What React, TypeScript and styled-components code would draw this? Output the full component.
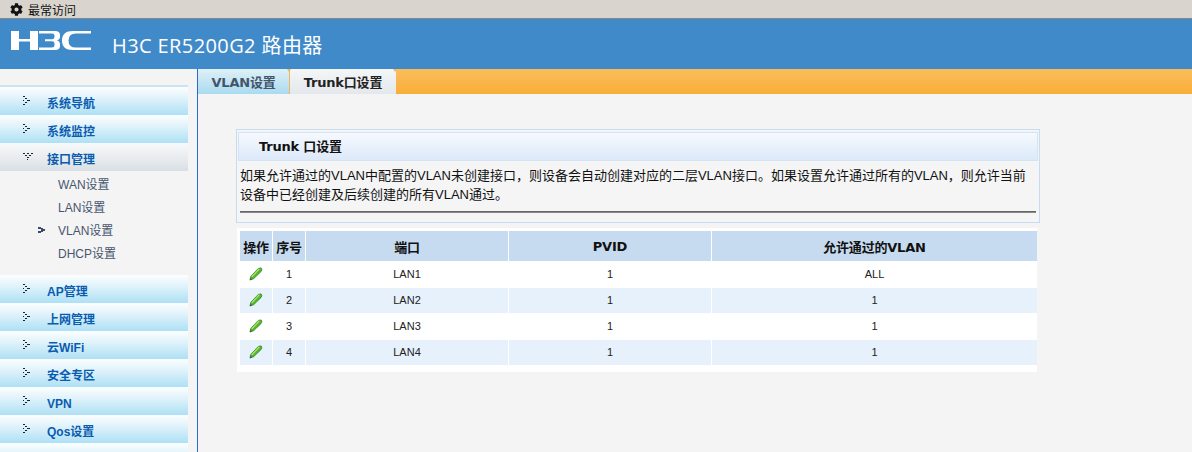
import React from "react";
import styled, { createGlobalStyle } from "styled-components";
import { FaCog } from "react-icons/fa";

const FONT = `"Liberation Sans", "Noto Sans CJK SC", sans-serif`;
const WIDE_FONT = `"DejaVu Sans", "Noto Sans CJK SC", sans-serif`;

const menuTop = ["系统导航", "系统监控"];
const menuBottom = ["AP管理", "上网管理", "云WiFi", "安全专区", "VPN", "Qos设置"];
const subMenu = ["WAN设置", "LAN设置", "VLAN设置", "DHCP设置"];
const rows = [
	{ id: 1, port: "LAN1", pvid: "1", vlan: "ALL" },
	{ id: 2, port: "LAN2", pvid: "1", vlan: "1" },
	{ id: 3, port: "LAN3", pvid: "1", vlan: "1" },
	{ id: 4, port: "LAN4", pvid: "1", vlan: "1" },
];

const Logo = () => (
	<LogoMark width="82" height="22" viewBox="0 0 82 22">
		<g fill="#ffffff">
			<path d="M1 1h8v8h11V1h8v19h-8v-8.500H9V20H1z" />
			<path d="M29 1h16q5 0 5 4v1.800q0 2.800-3 3.600q3 .8 3 3.800V16q0 4-5 4H29v-2.400h13q2.500 0 2.500-2.400v-1.500q0-2.500-2.500-2.500h-7V9.300h7q2.500 0 2.500-2.300V5.700q0-2.300-2.500-2.300H29z" />
			<path d="M81 1v2.400H66q-7.500 0-7.500 7.100T66 17.600h15V20H63q-11 0-11-9.500T63 1z" />
		</g>
	</LogoMark>
);

const Pencil = () => (
	<svg width="14" height="14" viewBox="0 0 15 15" style={{ display: "block" }}>
		<path d="M1 14l1-4 8-8.500 3-.5.800 2-1 2-7.800 7.500z" fill="#58b82c" stroke="#2f7a30" strokeWidth="0.8" />
		<path d="M3 10.500l8-8.500" stroke="#b4ec6a" strokeWidth="1.200" />
		<path d="M1 14l.7-2.600 1.800 1.700z" fill="#3c5e46" />
	</svg>
);

const Arrows = ({ open }: { open?: boolean }) => (
	<svg width="12" height="10" viewBox="0 0 12 10" style={{ display: "block" }}>
		{open ? (
			<path d="M1 1h2v1H1zM5 1h2v1H5zM9 1h2v1H9zM3 3h2v1H3zM7 3h2v1H7zM5 5h2v1H5zM5 7h1v1H5z" fill="#1d2430" />
		) : (
			<path d="M1 0h2v1H1zM3 2h2v1H3zM1 4h1v1H1zM5 4h3v1H5zM3 6h2v1H3zM1 8h2v1H1z" fill="#1d2430" />
		)}
	</svg>
);

const SubArrow = () => (
	<svg width="7" height="6" viewBox="0 0 7 6" style={{ display: "block" }}>
		<path d="M0 0h3v1h2v1h2v2H5v1H3v1H0V4h3V2H0z" fill="#3a4a68" />
	</svg>
);

export default function App() {
	return (
		<Page>
			<GlobalStyle />
			<Favorites>
				<FaCog size={13} color="#111" />
				<span>最常访问</span>
			</Favorites>
			<Banner>
				<Logo />
				<BannerTitle>H3C ER5200G2 路由器</BannerTitle>
			</Banner>
			<Body>
				<Sidebar>
					<MenuRule />
					{menuTop.map((m) => (
						<MenuItem key={m}>
							<Arrows />
							<MenuLabel>{m}</MenuLabel>
						</MenuItem>
					))}
					<MenuItem $active>
						<Arrows open />
						<MenuLabel>接口管理</MenuLabel>
					</MenuItem>
					<SubList>
						{subMenu.map((s) => (
							<SubItem key={s}>
								<SubMark>{s === "VLAN设置" && <SubArrow />}</SubMark>
								{s}
							</SubItem>
						))}
					</SubList>
					{menuBottom.map((m) => (
						<MenuItem key={m}>
							<Arrows />
							<MenuLabel>{m}</MenuLabel>
						</MenuItem>
					))}
					<MenuItem />
				</Sidebar>
				<Main>
					<TabBar>
						<Tab>VLAN设置</Tab>
						<Tab $active>Trunk口设置</Tab>
					</TabBar>
					<Content>
						<Panel>
							<PanelTitle>Trunk 口设置</PanelTitle>
							<PanelText>
								如果允许通过的VLAN中配置的VLAN未创建接口，则设备会自动创建对应的二层VLAN接口。如果设置允许通过所有的VLAN，则允许当前设备中已经创建及后续创建的所有VLAN通过。
							</PanelText>
							<Rule />
						</Panel>
						<TableWrap>
							<Table>
								<colgroup>
									<col width="33" />
									<col width="33" />
									<col width="203" />
									<col width="203" />
									<col width="325" />
								</colgroup>
								<thead>
									<tr>
										<Th>操作</Th>
										<Th>序号</Th>
										<Th>端口</Th>
										<Th>PVID</Th>
										<Th>允许通过的VLAN</Th>
									</tr>
								</thead>
								<tbody>
									{rows.map((r) => (
										<Row key={r.id} $odd={r.id % 2 === 1}>
											<Td>
												<EditButton>
													<Pencil />
												</EditButton>
											</Td>
											<Td>{r.id}</Td>
											<Td>{r.port}</Td>
											<Td>{r.pvid}</Td>
											<Td>{r.vlan}</Td>
										</Row>
									))}
								</tbody>
							</Table>
						</TableWrap>
					</Content>
				</Main>
			</Body>
		</Page>
	);
}

const GlobalStyle = createGlobalStyle`
	html, body {
		margin: 0;
		padding: 0;
		height: 100%;
		overflow: hidden;
		background: #f4f4f4;
		font-family: ${FONT};
	}
`;

const Page = styled.div`
	width: 1192px;
	height: 452px;
	display: flex;
	flex-direction: column;
	overflow: hidden;
`;

const Favorites = styled.div`
	height: 18px;
	flex: none;
	display: flex;
	align-items: center;
	gap: 5px;
	padding-left: 10px;
	background: #d9d5ce;
	border-bottom: 1px solid #8b8780;
	font-size: 12px;
	color: #111;
`;

const Banner = styled.header`
	height: 50px;
	flex: none;
	display: flex;
	align-items: center;
	gap: 20px;
	padding-left: 10px;
	background: #418ac9;
`;

const LogoMark = styled.svg`
	display: block;
	margin-bottom: 6px;
`;

const BannerTitle = styled.div`
	font-family: "Open Sans", "Noto Sans CJK SC", sans-serif;
	font-size: 20px;
	letter-spacing: 0.4px;
	color: #fff;
	padding-top: 1px;
`;

const Body = styled.div`
	flex: 1;
	display: flex;
	min-height: 0;
`;

const Sidebar = styled.nav`
	width: 197px;
	flex: none;
	padding-top: 16px;
	border-right: 1px solid #2a6cc8;
	background: #f4f4f4;
	box-sizing: content-box;
	overflow: hidden;
`;

const MenuRule = styled.div`
	width: 188px;
	height: 2px;
	background: #cfe2f0;
`;

const MenuItem = styled.div<{ $active?: boolean }>`
	width: 188px;
	height: 28px;
	flex: none;
	display: flex;
	align-items: center;
	gap: 13px;
	padding-left: 22px;
	box-sizing: border-box;
	background: ${(p) =>
		p.$active
			? "linear-gradient(#f7f9fa, #e9edf0 50%, #d9dfe4)"
			: "linear-gradient(#fbfeff, #e4f4fb 35%, #aee0f5)"};
	font-size: 12px;
	font-weight: 700;
	color: #0a5cb0;
`;

const MenuLabel = styled.span`
	line-height: 14px;
	padding-top: 6px;
`;

const SubList = styled.ul`
	list-style: none;
	margin: 0;
	padding: 1px 0 11px;
	height: 104px;
	box-sizing: border-box;
`;

const SubItem = styled.li`
	height: 23px;
	display: flex;
	align-items: center;
	font-size: 12px;
	color: #47566e;
`;

const SubMark = styled.span`
	width: 58px;
	padding-left: 38px;
	box-sizing: border-box;
	flex: none;
`;

const Main = styled.main`
	flex: 1;
	min-width: 0;
	display: flex;
	flex-direction: column;
`;

const TabBar = styled.div`
	height: 25px;
	flex: none;
	display: flex;
	background: linear-gradient(#f9bd5e, #faae36);
`;

const Tab = styled.div<{ $active?: boolean }>`
	position: relative;
	width: ${(p) => (p.$active ? "107px" : "91px")};
	box-sizing: border-box;
	display: flex;
	align-items: center;
	justify-content: center;
	font-family: ${WIDE_FONT};
	font-size: 13px;
	font-weight: 700;
	letter-spacing: -0.2px;
	color: ${(p) => (p.$active ? "#222" : "#44546a")};
	border-left: ${(p) => (p.$active ? "1px solid #f5b658" : "none")};
	background: ${(p) =>
		p.$active
			? "linear-gradient(#f4f6f7, #e4e8ec)"
			: "linear-gradient(#dff0f7, #a9dbf0)"};

	${(p) =>
		p.$active &&
		`
		&::before,
		&::after {
			content: "";
			position: absolute;
			top: 0;
			width: 0;
			height: 0;
			border-left: 2px solid transparent;
			border-right: 2px solid transparent;
			border-top: 3px solid #f5b658;
		}
		&::before {
			left: -3px;
		}
		&::after {
			right: -1px;
		}
	`}
`;

const Content = styled.div`
	flex: 1;
	padding: 35px 0 0 38px;
	background: #f4f4f4;
`;

const Panel = styled.section`
	width: 804px;
	height: 94px;
	box-sizing: border-box;
	border: 1px solid #c5dcf2;
	padding: 2px 1px;
	background: #f5f5f5;
`;

const PanelTitle = styled.h2`
	margin: 0;
	height: 29px;
	padding: 0 0 2px 20px;
	display: flex;
	align-items: center;
	box-sizing: border-box;
	border: 1px solid #d2e3f5;
	background: linear-gradient(#f6f9fe, #dce9f9);
	font-family: ${WIDE_FONT};
	font-size: 13px;
	font-weight: 700;
	letter-spacing: -0.2px;
	color: #111;
`;

const PanelText = styled.p`
	margin: 5px 0 0;
	padding: 0 2px;
	font-size: 13px;
	line-height: 19px;
	height: 38px;
	color: #111;
`;

const Rule = styled.div`
	margin: 7px 2px 0;
	height: 2px;
	background: linear-gradient(#555, #9a9a9a);
`;

const TableWrap = styled.div`
	width: 800px;
	height: 144px;
	margin: 5px 0 0 1px;
	padding: 3px 0 0 3px;
	box-sizing: border-box;
	background: #fff;
`;

const Table = styled.table`
	width: 797px;
	table-layout: fixed;
	border-collapse: separate;
	border-spacing: 0;
`;

const Th = styled.th`
	height: 30px;
	padding: 0;
	background: #c6dbef;
	border-right: 1px solid #fff;
	font-family: ${WIDE_FONT};
	font-size: 13px;
	font-weight: 700;
	letter-spacing: -0.2px;
	color: #111;
	text-align: center;

	&:last-child {
		border-right: none;
	}
`;

const Td = styled.td`
	padding: 0 0 1px;
	border-right: 1px solid #fff;
	font-size: 11px;
	color: #222;
	text-align: center;

	&:last-child {
		border-right: none;
	}
`;

const Row = styled.tr<{ $odd: boolean }>`
	height: ${(p) => (p.$odd ? "27px" : "25px")};
	background: ${(p) => (p.$odd ? "#fff" : "#e6f1fb")};
`;

const EditButton = styled.span`
	display: flex;
	justify-content: center;
`;
